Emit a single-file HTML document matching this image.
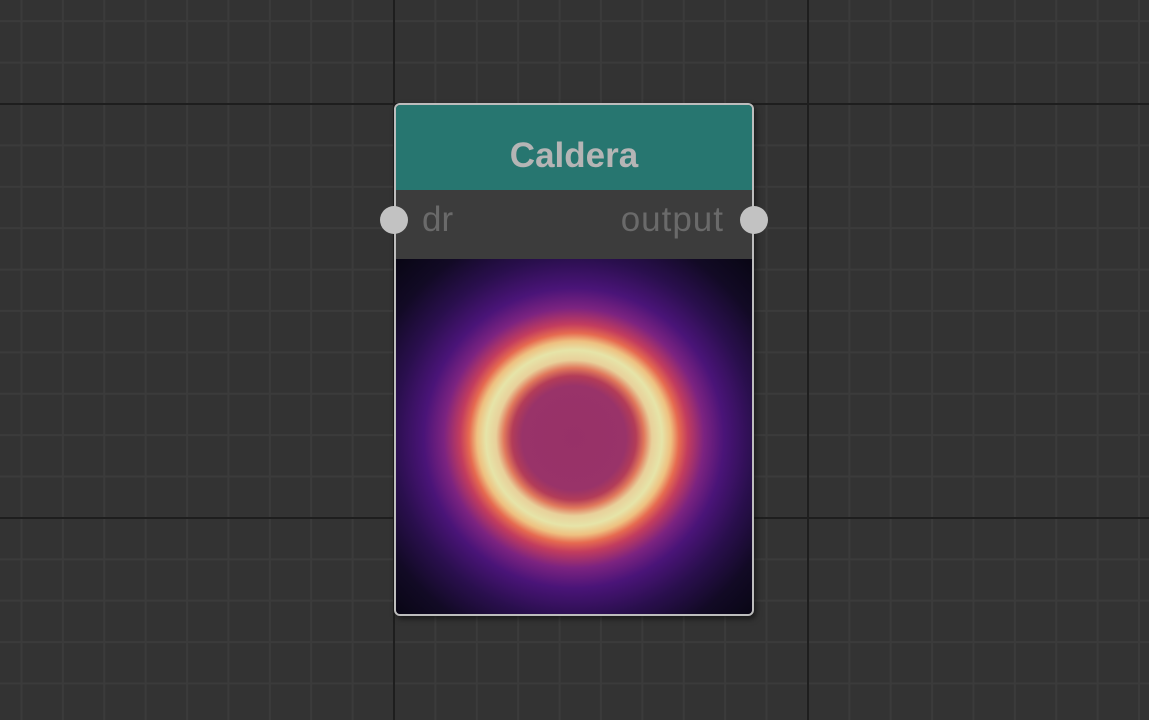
<!DOCTYPE html>
<html><head><style>
html,body{margin:0;padding:0}
body{width:1149px;height:720px;overflow:hidden;position:relative;background-color:#333333;
background-image:
linear-gradient(to right,#1e1e1e 0,#1e1e1e 2px,transparent 2px),
linear-gradient(to bottom,#1e1e1e 0,#1e1e1e 2px,transparent 2px),
linear-gradient(to right,#3b3b3b 0,#3b3b3b 2px,transparent 2px),
linear-gradient(to bottom,#3b3b3b 0,#3b3b3b 2px,transparent 2px);
background-size:414px 414px,414px 414px,41.4px 41.4px,41.4px 41.4px;
background-position:393px 0,0 103px,393px 0,0 103px;}
.node{position:absolute;left:394px;top:103px;width:356px;height:509px;border:2px solid #bdbdbd;border-radius:6px;overflow:hidden;background:#3c3c3c;box-shadow:2px 3px 6px rgba(0,0,0,.5)}
.hdr{height:85px;background:#277670;color:#b5b5b5;font:bold 35px "Liberation Sans",sans-serif;text-align:center;line-height:102px;}
.ports{height:69px;position:relative;color:#6a6a6a;font:35px "Liberation Sans",sans-serif}
.img{position:absolute;left:0;top:154px;width:356px;height:357px;
background:radial-gradient(circle at 178px 179px,#973168 0,#993369 52px,#b33c58 62px,#e0785c 70px,#e8d09a 78px,#e6e4a8 88px,#eec080 97px,#e66a50 105px,#c23c5e 114px,#7c2380 130px,#4a1478 150px,#2a0f4e 180px,#120a25 215px,#060510 260px)}
.dot{position:absolute;width:28px;height:28px;border-radius:50%;background:#c2c2c2;top:206px}
</style></head><body>
<div class="node">
<div class="hdr">Caldera</div>
<div class="ports"><span style="position:absolute;left:26px;top:10px">dr</span><span style="position:absolute;right:28px;top:10px;letter-spacing:1px">output</span></div>
<div class="img"></div>
</div>
<div class="dot" style="left:380px"></div>
<div class="dot" style="left:740px"></div>
</body></html>
